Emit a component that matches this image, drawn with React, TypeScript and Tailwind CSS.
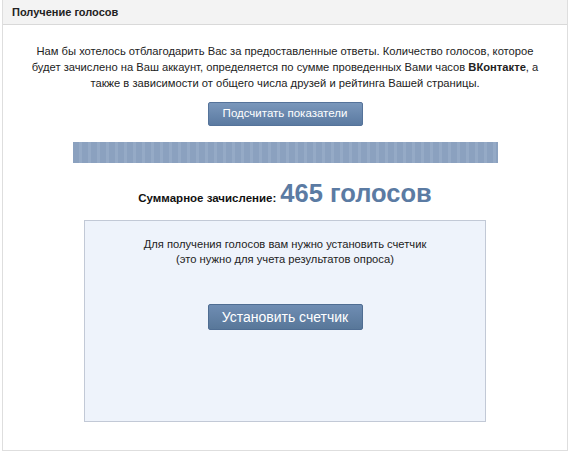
import React from "react";

export default function App() {
  return (
    <div className="w-[569px] h-[453px] bg-white" style={{ fontFamily: '"Liberation Sans", Arial, sans-serif' }}>
      <div className="ml-[2px] w-[566px] h-[451px] border border-t-0 border-[#dedede] flex flex-col">
        <div className="h-[25px] bg-[#f3f3f3] border-b border-[#d9d9d9] flex items-center pl-[9px] text-[11px] font-bold text-[#222]">
          Получение голосов
        </div>
        <div className="flex flex-col items-center">
          <p className="mt-[18px] w-[540px] text-center text-[11.2px] leading-[16px] text-[#222]">
            Нам бы хотелось отблагодарить Вас за предоставленные ответы. Количество голосов, которое
            <br />
            будет зачислено на Ваш аккаунт, определяется по сумме проведенных Вами часов <b>ВКонтакте</b>, а
            <br />
            также в зависимости от общего числа друзей и рейтинга Вашей страницы.
          </p>
          <button className="mt-[11px] w-[155px] h-[24px] rounded-[2px] bg-gradient-to-b from-[#7a97bb] to-[#5b7aa1] border border-[#55739a] text-white text-[11.5px]">
            Подсчитать показатели
          </button>
          <div className="mt-[16px] w-[425px] h-[21px] bg-[#8ea4c1]" style={{ backgroundImage: "repeating-linear-gradient(90deg, #8ba1bf 0px, #8ba1bf 6px, #95aac6 6px, #95aac6 9px)" }} />
          <div className="mt-[15px] flex items-baseline">
            <span className="text-[11.5px] font-bold text-[#111]">Суммарное зачисление:</span>
            <span className="ml-[4px] text-[25.5px] font-bold text-[#5b7ba3] leading-[30px]">465 голосов</span>
          </div>
          <div className="mt-[12px] w-[402px] h-[202px] bg-[#eef3fb] border border-[#c2c9d6] flex flex-col items-center">
            <p className="mt-[16px] text-center text-[11.2px] leading-[15px] text-[#222]">
              Для получения голосов вам нужно установить счетчик<br />(это нужно для учета результатов опроса)
            </p>
            <button className="mt-[37px] w-[155px] h-[26px] rounded-[2px] bg-gradient-to-b from-[#6f8db3] to-[#587799] border border-[#4f6d92] text-white text-[14px]">
              Установить счетчик
            </button>
          </div>
        </div>
      </div>
    </div>
  );
}
